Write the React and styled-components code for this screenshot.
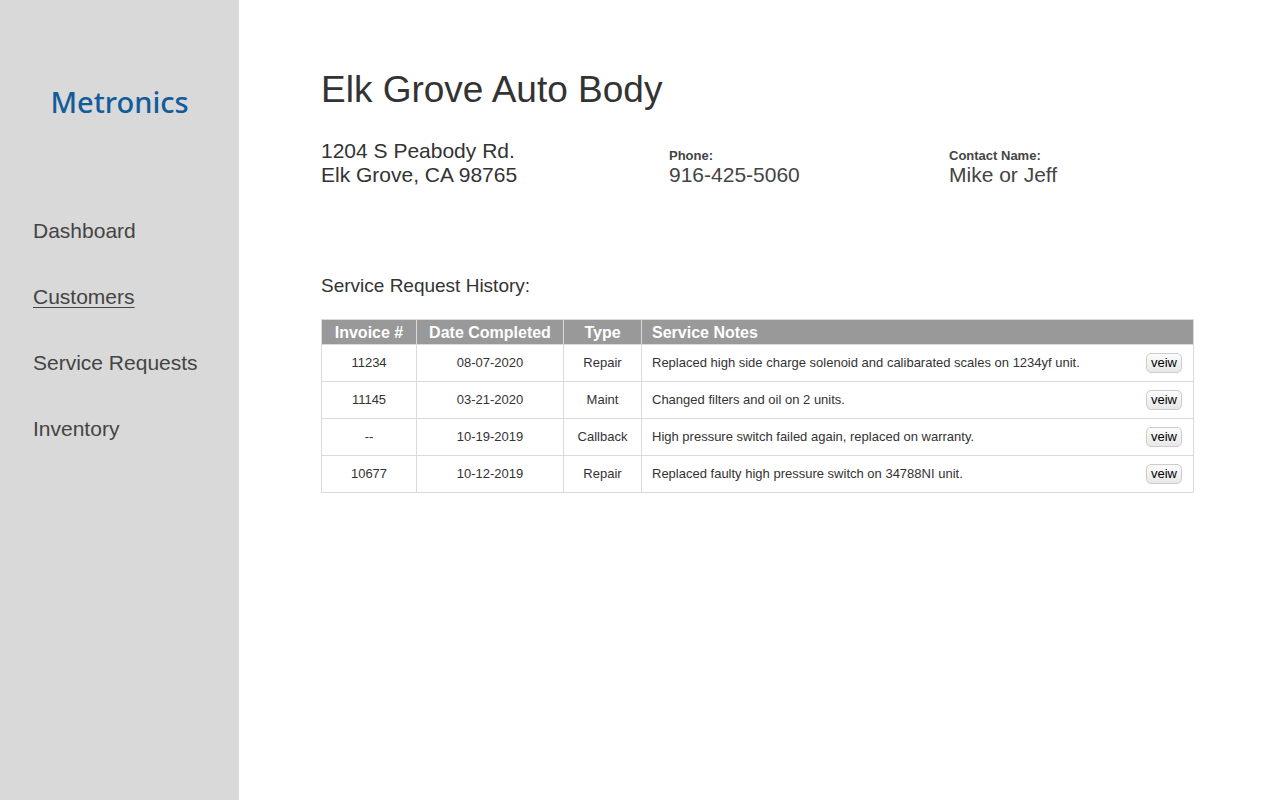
import React from "react";
import styled, { createGlobalStyle } from "styled-components";

const GlobalStyle = createGlobalStyle`
  * { box-sizing: border-box; }
  body {
    margin: 0;
    background: #ffffff;
    color: #333333;
    font-family: "Liberation Sans", Arial, sans-serif;
  }
`;

const Page = styled.div`
  display: flex;
  min-height: 100vh;
`;

const Sidebar = styled.aside`
  flex: 0 0 239px;
  padding-top: 81px;
  background: #d9d9d9;
`;

const Logo = styled.div`
  color: #125c9b;
  font-family: "Noto Sans", sans-serif;
  font-size: 29px;
  font-weight: 500;
  line-height: 42px;
  text-align: center;
`;

const Nav = styled.nav`
  display: flex;
  flex-direction: column;
  align-items: flex-start;
  gap: 42px;
  margin-top: 96px;
  padding-left: 33px;
`;

const NavLink = styled.a`
  color: #444444;
  font-size: 21px;
  line-height: 24px;
  text-decoration: ${({ $active }) => ($active ? "underline" : "none")};
  text-decoration-thickness: 1px;
  text-underline-offset: 3px;
`;

const Main = styled.main`
  flex: 1;
  min-width: 0;
  padding: 69px 86px 40px 82px;
`;

const Title = styled.h1`
  margin: 0;
  font-size: 37px;
  font-weight: 400;
  line-height: 42px;
`;

const Details = styled.section`
  display: grid;
  grid-template-columns: 348px 280px auto;
  align-items: end;
  margin-top: 28px;
`;

const Address = styled.address`
  font-size: 21px;
  font-style: normal;
  line-height: 24px;
`;

const Field = styled.div`
  color: #444444;
`;

const FieldLabel = styled.div`
  font-size: 13px;
  font-weight: 700;
  line-height: 15px;
`;

const FieldValue = styled.div`
  font-size: 21px;
  line-height: 24px;
`;

const SectionTitle = styled.h2`
  margin: 87px 0 22px;
  font-size: 19px;
  font-weight: 400;
  line-height: 23px;
`;

const Table = styled.table`
  width: 100%;
  border: 1px solid #dadada;
  border-collapse: collapse;
  table-layout: fixed;
`;

const HeadCell = styled.th`
  width: ${({ $width }) => $width || "auto"};
  height: 25px;
  padding: ${({ $left }) => ($left ? "1px 10px 0" : "1px 0 0")};
  border: 1px solid #dadada;
  background: #999999;
  color: #ffffff;
  font-size: 16px;
  line-height: 20px;
  text-align: ${({ $left }) => ($left ? "left" : "center")};
`;

const Cell = styled.td`
  height: 37px;
  padding: 0;
  border: 1px solid #dadada;
  font-size: 13px;
  line-height: 16px;
  text-align: center;
`;

const NotesCell = styled(Cell)`
  padding: 0 11px 0 10px;
`;

const Notes = styled.div`
  display: flex;
  align-items: center;
  justify-content: space-between;
  text-align: left;
`;

const ViewButton = styled.button`
  flex: none;
  width: 36px;
  height: 20px;
  padding: 0;
  border: 1px solid #cccccc;
  border-radius: 5px;
  background: linear-gradient(#fcfcfc, #e8e8e8);
  color: #000000;
  font-family: inherit;
  font-size: 13px;
  line-height: 18px;
`;

const navItems = ["Dashboard", "Customers", "Service Requests", "Inventory"];

const requests = [
  { invoice: "11234", date: "08-07-2020", type: "Repair", notes: "Replaced high side charge solenoid and calibarated scales on 1234yf unit." },
  { invoice: "11145", date: "03-21-2020", type: "Maint", notes: "Changed filters and oil on 2 units." },
  { invoice: "--", date: "10-19-2019", type: "Callback", notes: "High pressure switch failed again, replaced on warranty." },
  { invoice: "10677", date: "10-12-2019", type: "Repair", notes: "Replaced faulty high pressure switch on 34788NI unit." },
];

export default function App() {
  return (
    <Page>
      <GlobalStyle />
      <Sidebar>
        <Logo>Metronics</Logo>
        <Nav>
          {navItems.map((item) => (
            <NavLink key={item} href="#" $active={item === "Customers"}>
              {item}
            </NavLink>
          ))}
        </Nav>
      </Sidebar>
      <Main>
        <Title>Elk Grove Auto Body</Title>
        <Details>
          <Address>
            1204 S Peabody Rd.
            <br />
            Elk Grove, CA 98765
          </Address>
          <Field>
            <FieldLabel>Phone:</FieldLabel>
            <FieldValue>916-425-5060</FieldValue>
          </Field>
          <Field>
            <FieldLabel>Contact Name:</FieldLabel>
            <FieldValue>Mike or Jeff</FieldValue>
          </Field>
        </Details>
        <SectionTitle>Service Request History:</SectionTitle>
        <Table>
          <thead>
            <tr>
              <HeadCell $width="95px">Invoice #</HeadCell>
              <HeadCell $width="147px">Date Completed</HeadCell>
              <HeadCell $width="78px">Type</HeadCell>
              <HeadCell $left>Service Notes</HeadCell>
            </tr>
          </thead>
          <tbody>
            {requests.map((r) => (
              <tr key={r.date}>
                <Cell>{r.invoice}</Cell>
                <Cell>{r.date}</Cell>
                <Cell>{r.type}</Cell>
                <NotesCell>
                  <Notes>
                    <span>{r.notes}</span>
                    <ViewButton type="button">veiw</ViewButton>
                  </Notes>
                </NotesCell>
              </tr>
            ))}
          </tbody>
        </Table>
      </Main>
    </Page>
  );
}
